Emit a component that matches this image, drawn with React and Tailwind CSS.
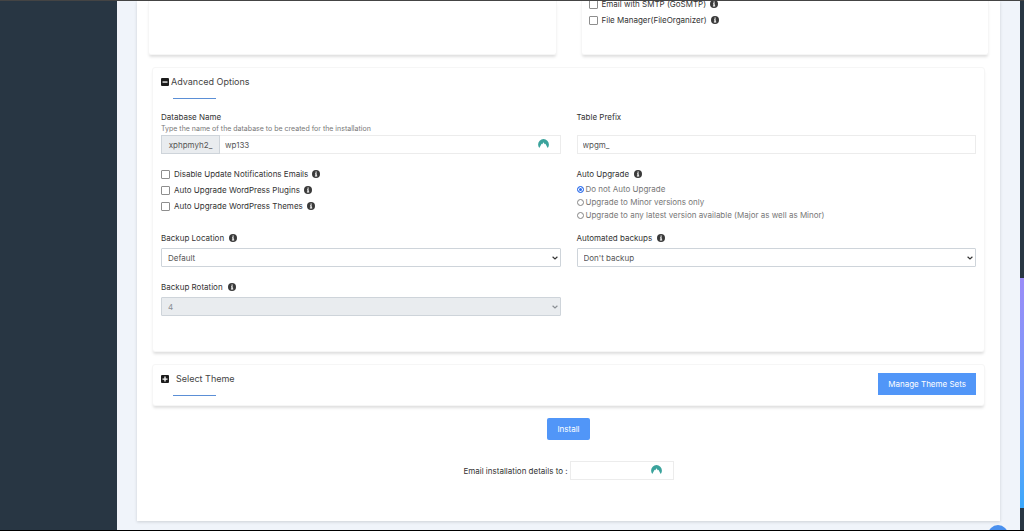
import { useState } from 'react'
import clsx from 'clsx'

function InfoIcon() {
  return (
    <svg viewBox="0 0 16 16" className="size-2 shrink-0" aria-hidden="true">
      <circle cx="8" cy="8" r="8" fill="#3a3a3a" />
      <path d="M7 3h2.4v2.3H7zM6 6.6h3.4v4.6h1V13H5.8v-1.8H7V8.4H6z" fill="#fff" />
    </svg>
  )
}

function ToggleIcon({ open }) {
  return (
    <svg viewBox="0 0 16 16" className="size-2 shrink-0" aria-hidden="true">
      <rect width="16" height="16" rx="2" fill="#1c1c1c" />
      <path d={open ? 'M3 6.8h10v2.6H3z' : 'M3 6.8h3.7V3h2.6v3.8H13v2.5H9.300V13H6.700V9.300H3z'} fill="#fff" />
    </svg>
  )
}

function VaultIcon() {
  return (
    <svg viewBox="0 0 22 18" className="absolute right-3 top-1 h-[9px] w-[11px]" aria-hidden="true">
      <path
        d="M2.600 18A10.800 10.800 0 0 1 0.200 11a10.800 10.800 0 0 1 21.600 0c0 2.700-.9 5.200-2.400 7l-4.600-8.500-1.300 1.200L11 6.500l-2.500 4.200-1.300-1.200z"
        fill="#3ba39c"
      />
    </svg>
  )
}

function Label({ htmlFor, info, children }) {
  return (
    <div className="flex h-3 items-center gap-[5px] text-[#333]">
      <label htmlFor={htmlFor}>{children}</label>
      {info && <InfoIcon />}
    </div>
  )
}

function Check({ id, children }) {
  return (
    <div className="flex h-3 items-center gap-1 text-[#333]">
      <input
        id={id}
        type="checkbox"
        className="size-[9px] shrink-0 appearance-none rounded-[1px] border border-[#8e8e8e] bg-white checked:bg-blue-600"
      />
      <label htmlFor={id}>{children}</label>
      <InfoIcon />
    </div>
  )
}

function Select({ id, options, disabled }) {
  return (
    <div className="relative">
      <select
        id={id}
        disabled={disabled}
        className={clsx(
          'block h-[19px] w-full appearance-none rounded-[1px] border border-[#ced4da] px-1.5 opacity-100',
          disabled ? 'bg-[#e9ecef] text-[#8a8f94]' : 'bg-white text-[#555]',
        )}
      >
        {options.map((o) => <option key={o}>{o}</option>)}
      </select>
      <svg viewBox="0 0 10 6" className="pointer-events-none absolute right-[3px] top-2 h-1 w-1.5" aria-hidden="true">
        <path d="M1 1l4 3.500L9 1" fill="none" stroke={disabled ? '#8a8f94' : '#333'} strokeWidth="2" />
      </svg>
    </div>
  )
}

const UPGRADES = [
  'Do not Auto Upgrade',
  'Upgrade to Minor versions only',
  'Upgrade to any latest version available (Major as well as Minor)',
]

const PANEL = 'rounded-[3px] border border-[#f6f6f6] bg-white shadow-[0_3px_3px_-1px_rgba(0,0,0,0.13)]'
const INPUT = 'block h-[19px] w-full min-w-0 border border-[#ececec] bg-white px-[5px] text-[#555] outline-none'

function AdvancedOptions() {
  const [upgrade, setUpgrade] = useState(0)

  return (
    <section className={clsx(PANEL, 'px-2 pb-[35px] pt-2')}>
      <h2>
        <button type="button" className="flex h-3 items-center gap-[2px] text-[9px] leading-3 text-[#444]">
          <ToggleIcon open />
          Advanced Options
        </button>
      </h2>
      <div className="ml-3 mt-2.5 h-px w-[43px] bg-[#5b8fd6]" />

      <div className="mt-3 grid grid-cols-2 gap-x-4">
        <div>
          <Label htmlFor="db-name">Database Name</Label>
          <p className="h-3 text-[7px] leading-3 text-[#777]">Type the name of the database to be created for the installation</p>
          <div className="relative flex">
            <span className="flex h-[19px] w-[59px] shrink-0 items-center justify-center border border-[#ced4da] bg-[#e9ecef] text-[#555]">xphpmyh2_</span>
            <input id="db-name" defaultValue="wp133" className={clsx(INPUT, 'border-l-0')} />
            <VaultIcon />
          </div>
        </div>
        <div>
          <Label htmlFor="prefix">Table Prefix</Label>
          <input id="prefix" defaultValue="wpgm_" className={clsx(INPUT, 'mt-3')} />
        </div>
      </div>

      <div className="mt-3.5 grid grid-cols-2 gap-x-4">
        <div className="flex flex-col gap-1">
          <Check id="no-mails">Disable Update Notifications Emails</Check>
          <Check id="up-plugins">Auto Upgrade WordPress Plugins</Check>
          <Check id="up-themes">Auto Upgrade WordPress Themes</Check>
        </div>
        <fieldset>
          <legend className="flex h-3 items-center gap-[5px] text-[#333]">
            Auto Upgrade
            <InfoIcon />
          </legend>
          <div className="mt-[3px] flex flex-col gap-px text-[#777]">
            {UPGRADES.map((text, i) => (
              <label key={text} className="flex h-3 items-center gap-0.5">
                <input
                  type="radio"
                  name="upgrade"
                  checked={upgrade === i}
                  onChange={() => setUpgrade(i)}
                  className="size-[7px] shrink-0 appearance-none rounded-full border border-[#858585] bg-white checked:border-[#2f6fec] checked:bg-[#2f6fec] checked:shadow-[inset_0_0_0_1px_#fff]"
                />
                {text}
              </label>
            ))}
          </div>
        </fieldset>
      </div>

      <div className="mt-[11px] grid grid-cols-2 gap-x-4 gap-y-3.5">
        <div className="flex flex-col gap-1">
          <Label htmlFor="location" info>Backup Location</Label>
          <Select id="location" options={['Default']} />
        </div>
        <div className="flex flex-col gap-1">
          <Label htmlFor="auto-backups" info>Automated backups</Label>
          <Select id="auto-backups" options={["Don't backup", 'Once a day', 'Once a week', 'Once a month']} />
        </div>
        <div className="flex flex-col gap-1">
          <Label htmlFor="rotation" info>Backup Rotation</Label>
          <Select id="rotation" options={['4']} disabled />
        </div>
      </div>
    </section>
  )
}

export default function App() {
  return (
    <div className="relative flex min-h-screen flex-col overflow-hidden border-b border-t border-b-black border-t-[#444] bg-[#f0f4fa] font-['Inter','Liberation_Sans',sans-serif] text-[8px] leading-3">
      <div className="flex grow">
        <aside className="w-[117px] shrink-0 bg-[#283643]" />

        <main className="min-w-0 grow px-5 pb-2">
          <div className="bg-white px-[11px] pb-[41px] shadow-[0_1px_3px_rgba(0,0,0,0.15)]">
            <div className="grid grid-cols-2 gap-6">
              <div className={clsx(PANEL, 'rounded-t-none border-t-0')} />
              <div className={clsx(PANEL, 'flex flex-col gap-1 rounded-t-none border-t-0 px-[7px] pb-7')}>
                <div className="-mt-[3px]">
                  <Check id="gosmtp">Email with SMTP (GoSMTP)</Check>
                </div>
                <Check id="organizer">File Manager(FileOrganizer)</Check>
              </div>
            </div>

            <div className="mt-3 flex flex-col gap-3 px-1">
              <AdvancedOptions />

              <section className={clsx(PANEL, 'flex items-start justify-between p-2')}>
                <div>
                  <h2>
                    <button type="button" className="flex h-3 items-center gap-[7px] text-[9px] leading-3 text-[#444]">
                      <ToggleIcon />
                      Select Theme
                    </button>
                  </h2>
                  <div className="mb-px ml-3 mt-2.5 h-px w-[43px] bg-[#5b8fd6]" />
                </div>
                <button type="button" className="h-[22px] bg-[#5196f8] px-2.5 text-white">Manage Theme Sets</button>
              </section>
            </div>

            <div className="mt-3 flex flex-col items-center gap-[21px]">
              <button type="button" className="h-[22px] rounded-[2px] bg-[#5196f8] px-2.5 text-white">Install</button>
              <div className="flex items-center gap-0.5 text-[#333]">
                <label htmlFor="email">Email installation details to :</label>
                <div className="relative w-[104px]">
                  <input id="email" type="email" className={INPUT} />
                  <VaultIcon />
                </div>
              </div>
            </div>
          </div>
        </main>

        <div className="flex w-1 shrink-0 flex-col bg-[#283643] pb-[22px] pt-[277px]">
          <div className="grow bg-linear-to-b from-[#9a8cf8] to-[#3aa8fb]" />
        </div>
      </div>

      <button type="button" aria-label="Back to top" className="absolute -bottom-[15px] right-4 size-5 rounded-full bg-[#4a90ee]" />
    </div>
  )
}
